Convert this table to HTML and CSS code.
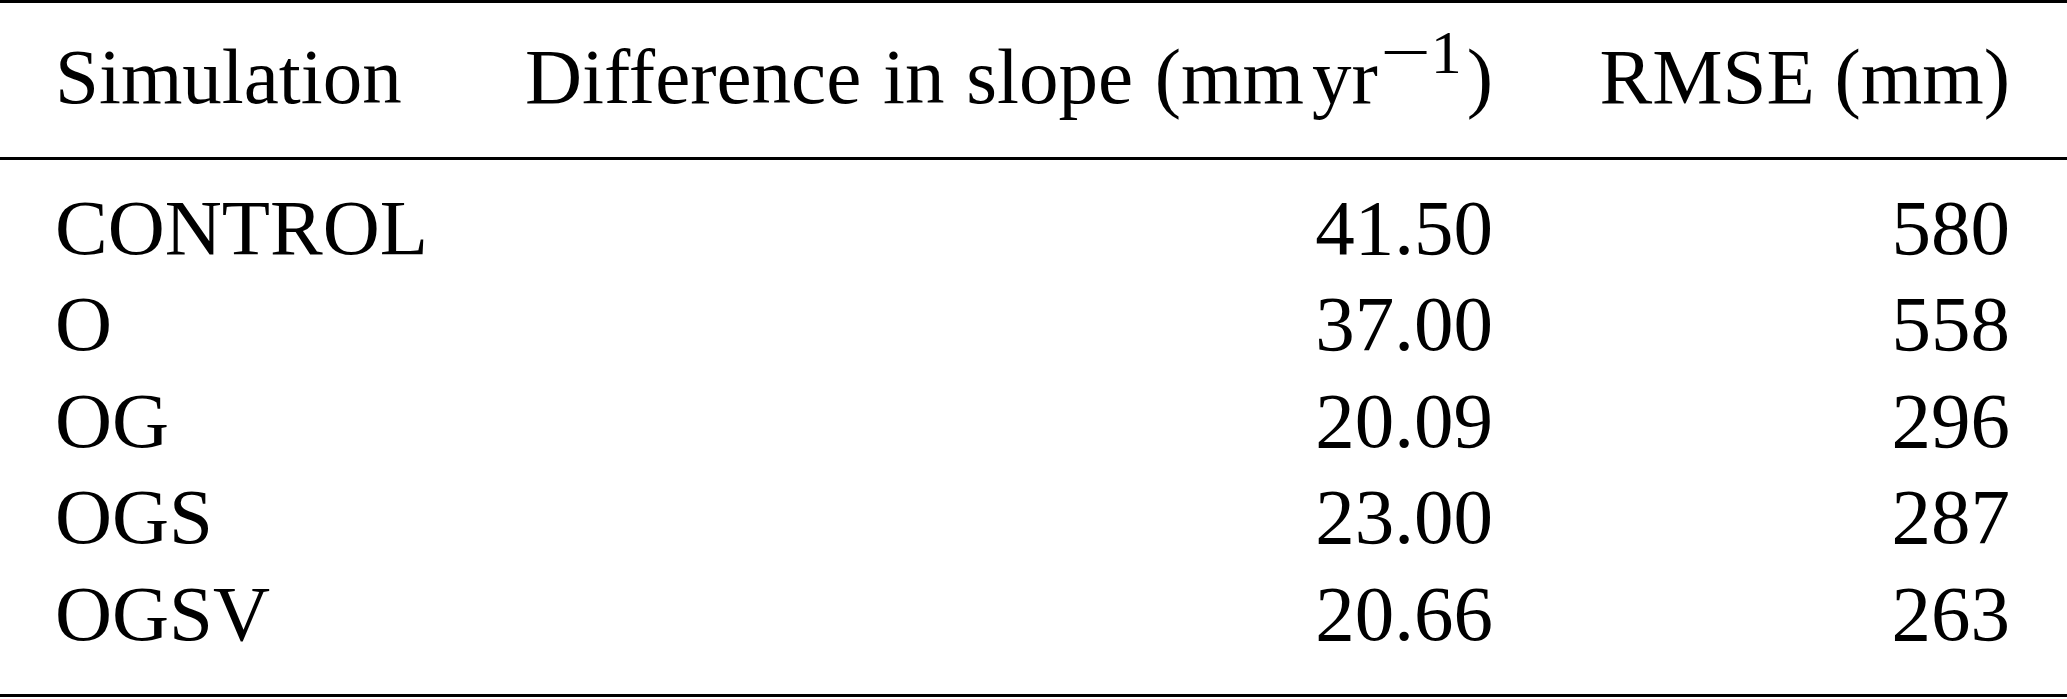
FILE: index.html
```html
<!DOCTYPE html>
<html lang="en">
<head>
    <meta charset="UTF-8">
    <meta name="viewport" content="width=device-width, initial-scale=1.0">
    <title>Simulation results</title>
    <link rel="stylesheet" href="styles.css">
</head>
<body>
    <table class="results">
        <colgroup>
            <col class="col-name">
            <col class="col-slope">
            <col class="col-rmse">
        </colgroup>
        <thead>
            <tr>
                <th class="name">Simulation</th>
                <th class="num slope-head">Difference in slope (mm<span class="thin"></span>yr<sup><span class="minus">&minus;</span>1</sup>)</th>
                <th class="num last">RMSE (mm)</th>
            </tr>
        </thead>
        <tbody>
            <tr>
                <td class="name">CONTROL</td>
                <td class="num">41.50</td>
                <td class="num last">580</td>
            </tr>
            <tr>
                <td class="name">O</td>
                <td class="num">37.00</td>
                <td class="num last">558</td>
            </tr>
            <tr>
                <td class="name">OG</td>
                <td class="num">20.09</td>
                <td class="num last">296</td>
            </tr>
            <tr>
                <td class="name">OGS</td>
                <td class="num">23.00</td>
                <td class="num last">287</td>
            </tr>
            <tr>
                <td class="name">OGSV</td>
                <td class="num">20.66</td>
                <td class="num last">263</td>
            </tr>
        </tbody>
    </table>
</body>
</html>
```
FILE: styles.css
```css
body {
    margin: 0;
    background-color: #fff;
    color: #000;
    font-family: "Liberation Serif", "Times New Roman", serif;
}

/* Booktabs style table */
.results {
    width: 100%;
    table-layout: fixed;
    border-collapse: separate;
    border-spacing: 0;
    font-size: 79px;
    line-height: 96.5px;
}

.col-name {
    width: 460px;
}

.col-slope {
    width: 1033px;
}

.results th,
.results td {
    padding: 0;
    font-weight: normal;
    white-space: nowrap;
}

.results th {
    border-top: 3px solid #000;
    border-bottom: 3px solid #000;
    padding-top: 26px;
    padding-bottom: 31px;
}

.results tbody tr:first-child td {
    padding-top: 20px;
}

.results tbody tr:last-child td {
    padding-bottom: 32px;
    border-bottom: 3px solid #000;
}

.name {
    text-align: left;
    padding-left: 55px !important;
}

.num {
    text-align: right;
}

.last {
    padding-right: 57px !important;
}

.slope-head {
    word-spacing: 2px;
}

.thin {
    display: inline-block;
    width: 8px;
}

.results sup {
    font-size: 62px;
    line-height: 0;
    vertical-align: 30px;
    margin-left: 4px;
    margin-right: 5px;
}

.minus {
    display: inline-block;
    transform: scaleX(1.45);
    margin: 0 8px 0 6px;
}
```
